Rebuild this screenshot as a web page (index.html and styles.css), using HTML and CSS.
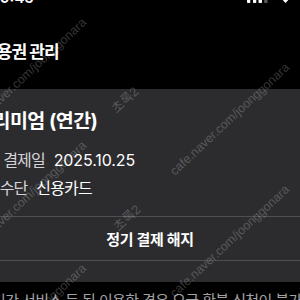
FILE: index.html
```html
<!DOCTYPE html>
<html lang="ko">
<head>
<meta charset="utf-8">
<title>이용권 관리</title>
<link rel="stylesheet" href="styles.css">
</head>
<body>
<div class="screen">
  <div class="status">
    <span class="time">9:45</span>
    <div class="status-icons">
      <svg class="signal" width="22" height="12" viewBox="0 0 22 12">
        <rect x="0" y="8" width="3.3" height="4" rx="0.8" fill="#fff"/>
        <rect x="6" y="6" width="3.3" height="6" rx="0.8" fill="#fff"/>
        <rect x="11.5" y="3.5" width="3.5" height="8.5" rx="0.8" fill="#fff"/>
        <rect x="17.2" y="1" width="3.3" height="11" rx="0.8" fill="#5a5a5a"/>
      </svg>
      <svg class="wifi" width="15" height="11" viewBox="0 0 15 11">
        <path d="M7.5 11 L4.4 7.7 A4.4 4.4 0 0 1 10.6 7.7 Z" fill="#fff"/>
        <path d="M2.6 5.8 A7 7 0 0 1 12.4 5.8 L11.3 6.9 A5.4 5.4 0 0 0 3.7 6.9 Z" fill="#fff"/>
        <path d="M0.6 3.7 A9.8 9.8 0 0 1 14.4 3.7 L13.3 4.8 A8.2 8.2 0 0 0 1.7 4.8 Z" fill="#fff"/>
      </svg>
    </div>
  </div>

  <header class="nav">
    <h1 class="nav-title">이용권 관리</h1>
  </header>

  <section class="card">
    <h2 class="plan">프리미엄 (연간)</h2>
    <dl class="info">
      <div class="info-row">
        <dt class="label">다음 결제일</dt>
        <dd class="value num">2025.10.25</dd>
      </div>
      <div class="info-row">
        <dt class="label">결제수단</dt>
        <dd class="value">신용카드</dd>
      </div>
    </dl>
    <div class="divider"></div>
    <button class="action" type="button">정기 결제 해지</button>
    <div class="divider"></div>
  </section>

  <p class="note">기간 서비스 등 된 이용한 경우 요금 환불 신청이 불가합니다</p>
</div>

<span class="watermark wm-a">cafe.naver.com/joonggonara</span>
<span class="watermark wm-b">cafe.naver.com/joonggonara</span>
<span class="watermark wm-c">cafe.naver.com/joonggonara</span>
<span class="watermark wm-d">cafe.naver.com/joonggonara</span>
<span class="watermark wm-e">cafe.naver.com/joonggonara</span>
<span class="watermark tag tag-a">초록2</span>
<span class="watermark tag tag-b">초록2</span>
</body>
</html>
```

FILE: styles.css
```css
html, body {
  margin: 0;
  padding: 0;
}

body {
  position: relative;
  width: 300px;
  height: 300px;
  overflow: hidden;
  background: #000;
  color: #fff;
  font-family: "Inter", "Noto Sans CJK KR", sans-serif;
}

.screen {
  width: 356px;
  margin: 0 -28px;
}

/* status bar (mostly cropped off the top) */
.status {
  height: 20px;
  margin-top: -17px;
  padding: 0 35px 0 28px;
  display: flex;
  justify-content: space-between;
  align-items: flex-end;
}

.time {
  font-size: 15px;
  font-weight: 600;
  line-height: 15px;
  margin-bottom: -2px;
}

.status-icons {
  display: flex;
  align-items: flex-end;
  gap: 9px;
}

.status-icons svg {
  display: block;
}

/* navigation title */
.nav {
  padding: 37px 0 25px 10px;
}

.nav-title {
  margin: 0;
  font-size: 17px;
  font-weight: 700;
  line-height: 24px;
  letter-spacing: -0.9px;
}

/* card */
.card {
  background: #2c2c2f;
  padding: 18px 0 21px;
}

.plan {
  margin: 0;
  padding-left: 3px;
  font-size: 19.5px;
  font-weight: 700;
  line-height: 28px;
  letter-spacing: -0.5px;
}

.info {
  margin: 11px 0 14px;
}

.info-row {
  display: flex;
  gap: 9px;
  line-height: 28px;
  font-size: 16px;
}

.label {
  margin: 0;
  color: #d4d4d8;
  letter-spacing: -0.9px;
}

.value {
  margin: 0;
  color: #fff;
  letter-spacing: -0.8px;
}

.value.num {
  letter-spacing: -0.1px;
}

.divider {
  height: 1px;
  background: #4e4e53;
}

.action {
  display: block;
  width: 100%;
  height: 43px;
  margin: 0;
  padding: 0;
  border: 0;
  background: transparent;
  color: #fff;
  font-family: inherit;
  font-size: 15px;
  font-weight: 700;
  letter-spacing: -0.3px;
  text-align: center;
}

.note {
  margin: 9px 0 0;
  padding-left: 20px;
  font-size: 15px;
  line-height: 20px;
  color: #a2a2a6;
  letter-spacing: -0.6px;
  white-space: nowrap;
}

/* watermark overlay */
.watermark {
  position: absolute;
  font-family: "Liberation Sans", "Noto Sans CJK KR", sans-serif;
  font-size: 12.5px;
  line-height: 14px;
  color: rgba(255, 255, 255, 0.22);
  white-space: nowrap;
  transform-origin: 0 50%;
  transform: rotate(-43deg);
  pointer-events: none;
}

.wm-a { left: -31px; top: 121px; }
.wm-b { left: -31px; top: 244px; }
.wm-c { left: -31px; top: 367px; }
.wm-d { left: 172px; top: 166px; }
.wm-e { left: 172px; top: 288px; }

.tag {
  font-size: 13px;
}

.tag-a { left: 114px; top: 104px; }
.tag-b { left: 116px; top: 222px; }
```
